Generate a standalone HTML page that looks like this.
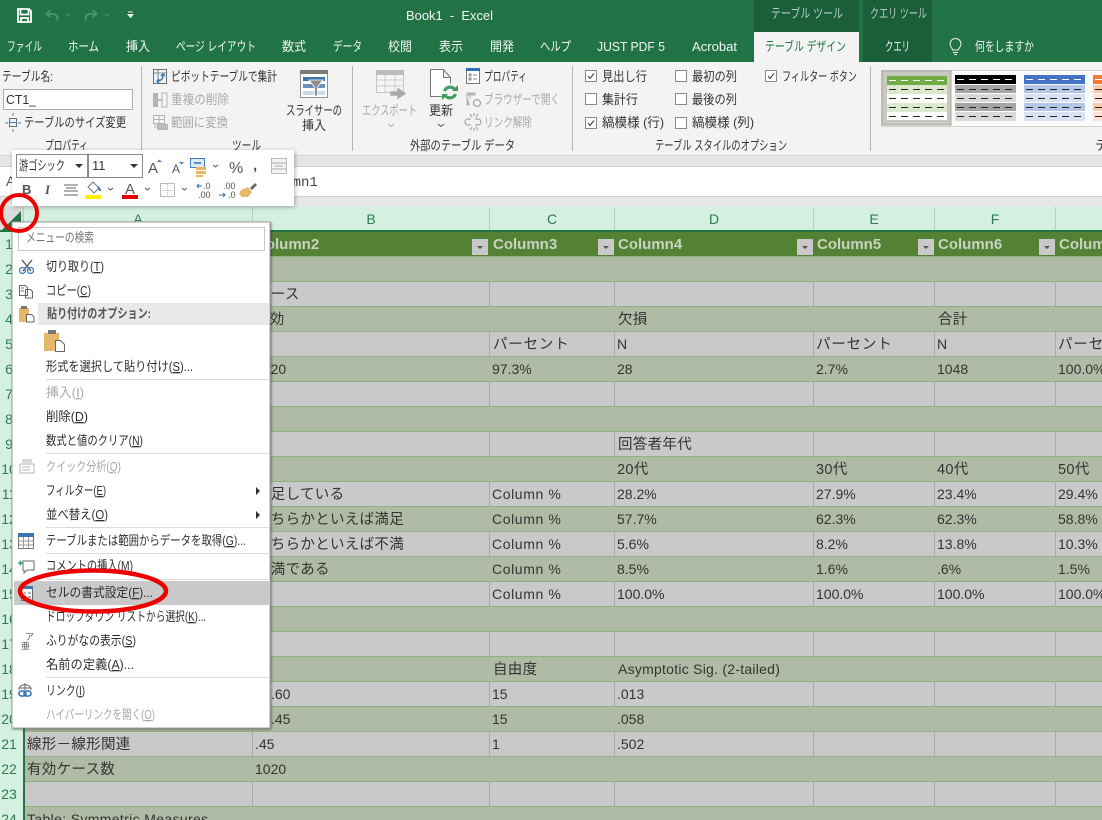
<!DOCTYPE html>
<html lang="ja">
<head>
<meta charset="utf-8">
<title>Book1 - Excel</title>
<style>
html,body{margin:0;padding:0;width:1102px;height:820px;overflow:hidden;background:#fff}
svg{display:block;position:absolute;left:0;top:0}
text{font-family:"Liberation Sans","Noto Sans CJK JP",sans-serif;font-size:13px;fill:#333;white-space:pre}
.tab{fill:#f2f6f3;font-size:13px}
.rb{fill:#333;font-size:13px}
.gr{fill:#a9a9a9;font-size:13px}
.m{fill:#2e2e2e;font-size:13px}
.md{fill:#a8a8a8;font-size:13px}
.cell{font-size:14px;fill:#333}
.jp{font-size:14.5px;fill:#333;letter-spacing:.3px}
.cp{font-size:14px;fill:#333;letter-spacing:.6px}
.hd{font-size:15px;font-weight:bold;fill:#c9d3c0}
.rn{font-size:14px;fill:#2f7a52;text-anchor:middle}
.ch{font-size:14px;fill:#2f7a52;text-anchor:middle}
.vl{stroke:#a8a8a8;stroke-width:1}
</style>
</head>
<body>
<svg width="1102" height="820" viewBox="0 0 1102 820" xmlns="http://www.w3.org/2000/svg">
<!-- title bar -->
<rect width="1102" height="62" fill="#217346"/>
<rect x="754" y="0" width="105" height="32" fill="#1b5e3a"/>
<rect x="863" y="0" width="69" height="62" fill="#1b5e3a"/>
<rect x="754" y="32" width="105" height="30" fill="#f3f3f3"/>
<!-- QAT -->
<path d="M18 9h11l2 2v11H18z M20.500 9.500v5h8v-5 M21 18h7v4h-7z" fill="none" stroke="#fff" stroke-width="1.800"/>
<path d="M50 10l-3.500 4 4 3M47 14h6a4.500 4.500 0 0 1 4.500 4.500c0 1-.3 1.500-.6 2" fill="none" stroke="#4f9070" stroke-width="2"/>
<path d="M66 14l2 2 2-2" stroke="#4f9070" fill="none"/>
<path d="M93 10l3.500 4-4 3M96 14h-6a4.500 4.500 0 0 0-4.500 4.500c0 1 .3 1.500.6 2" fill="none" stroke="#4f9070" stroke-width="2"/>
<path d="M105 14l2 2 2-2" stroke="#4f9070" fill="none"/>
<path d="M128 12h5M128 14.500h5l-2.500 3z" stroke="#e8f0ea" fill="#e8f0ea" stroke-width="1"/>
<text x="406" y="20" class="tab" textLength="87" lengthAdjust="spacingAndGlyphs">Book1  -  Excel</text>
<text x="771" y="18" style="fill:#b9cfc2" textLength="72" lengthAdjust="spacingAndGlyphs">テーブル ツール</text>
<text x="870" y="18" style="fill:#b9cfc2" textLength="57" lengthAdjust="spacingAndGlyphs">クエリ ツール</text>
<!-- tabs -->
<g>
<text x="7" y="51" class="tab" textLength="35" lengthAdjust="spacingAndGlyphs">ファイル</text>
<text x="68" y="51" class="tab" textLength="31" lengthAdjust="spacingAndGlyphs">ホーム</text>
<text x="126" y="51" class="tab" textLength="24" lengthAdjust="spacingAndGlyphs">挿入</text>
<text x="176" y="51" class="tab" textLength="80" lengthAdjust="spacingAndGlyphs">ページ レイアウト</text>
<text x="282" y="51" class="tab" textLength="24" lengthAdjust="spacingAndGlyphs">数式</text>
<text x="333" y="51" class="tab" textLength="29" lengthAdjust="spacingAndGlyphs">データ</text>
<text x="388" y="51" class="tab" textLength="24" lengthAdjust="spacingAndGlyphs">校閲</text>
<text x="439" y="51" class="tab" textLength="24" lengthAdjust="spacingAndGlyphs">表示</text>
<text x="490" y="51" class="tab" textLength="24" lengthAdjust="spacingAndGlyphs">開発</text>
<text x="540" y="51" class="tab" textLength="31" lengthAdjust="spacingAndGlyphs">ヘルプ</text>
<text x="597" y="51" class="tab" textLength="68" lengthAdjust="spacingAndGlyphs">JUST PDF 5</text>
<text x="692" y="51" class="tab" textLength="45" lengthAdjust="spacingAndGlyphs">Acrobat</text>
<text x="765" y="51" style="fill:#217346" textLength="81" lengthAdjust="spacingAndGlyphs">テーブル デザイン</text>
<text x="885" y="51" class="tab" textLength="25" lengthAdjust="spacingAndGlyphs">クエリ</text>
<text x="975" y="51" class="tab" textLength="59" lengthAdjust="spacingAndGlyphs">何をしますか</text>
<path d="M952.500 50c0-2-2.500-3-2.500-6a5.500 5.500 0 0 1 11 0c0 3-2.500 4-2.500 6z M953 52.500h5M954 54.500h3" fill="none" stroke="#e8f0ea" stroke-width="1"/>
</g>
<!-- ribbon -->
<rect x="0" y="62" width="1102" height="93" fill="#f3f3f3"/>
<rect x="0" y="155" width="1102" height="52" fill="#e6e6e6"/>
<rect x="0" y="155" width="1102" height="1" fill="#d2d2d2"/>
<rect x="141" y="66" width="1" height="85" fill="#b5b5b5"/>
<rect x="352" y="66" width="1" height="85" fill="#b5b5b5"/>
<rect x="572" y="66" width="1" height="85" fill="#b5b5b5"/>
<rect x="870" y="66" width="1" height="85" fill="#b5b5b5"/>
<text x="2" y="81" class="rb" textLength="51" lengthAdjust="spacingAndGlyphs">テーブル名:</text>
<rect x="3.500" y="89.500" width="129" height="20" fill="#fff" stroke="#ababab"/>
<text x="6" y="104" class="rb" textLength="30" lengthAdjust="spacingAndGlyphs">CT1_</text>
<g fill="none" stroke="#3f7fc1" stroke-width="1">
<rect x="9.500" y="118.500" width="7" height="8" stroke="#6d6d6d"/>
<path d="M13 113v3M13 129v3M5 123h3M18 123h3M9.500 122.500h7" />
</g>
<text x="24" y="127" class="rb" textLength="102" lengthAdjust="spacingAndGlyphs">テーブルのサイズ変更</text>
<text x="45" y="150" class="rb" textLength="43" lengthAdjust="spacingAndGlyphs">プロパティ</text>
<g>
<rect x="153.500" y="69.500" width="13" height="14" fill="#eef3f8" stroke="#6d6d6d"/>
<path d="M154 73h12M158 70v13" stroke="#8a8a8a"/>
<path d="M157 81c4 0 6-2 6-6M161 76l2-2 2 2M159 79l-2 2 2 2" fill="none" stroke="#2f72b6" stroke-width="1.300"/>
</g>
<text x="171" y="81" class="rb" textLength="106" lengthAdjust="spacingAndGlyphs">ピボットテーブルで集計</text>
<g fill="#b5b5b5">
<rect x="153" y="93" width="5" height="14"/><rect x="162" y="93" width="5" height="14" fill="none" stroke="#b5b5b5"/>
<path d="M158 100h4" stroke="#8a8a8a"/>
</g>
<text x="171" y="104" class="gr" textLength="58" lengthAdjust="spacingAndGlyphs">重複の削除</text>
<g fill="none" stroke="#b5b5b5">
<rect x="153.500" y="115.500" width="11" height="8"/><path d="M154 119.500h10M159 116v7"/>
<rect x="157.500" y="124.500" width="10" height="5" fill="#bdbdbd"/><path d="M155 124v3h3"/>
</g>
<text x="171" y="127" class="gr" textLength="57" lengthAdjust="spacingAndGlyphs">範囲に変換</text>
<text x="232" y="150" class="rb" textLength="29" lengthAdjust="spacingAndGlyphs">ツール</text>
<!-- slicer -->
<rect x="300.500" y="70.500" width="27" height="27" fill="#fff" stroke="#8f8f8f"/>
<rect x="300" y="70" width="28" height="4" fill="#7a7a7a"/>
<rect x="303" y="77" width="22" height="4" fill="#3f75ad"/>
<rect x="303" y="84" width="22" height="4" fill="#3f75ad" opacity=".8"/>
<rect x="303" y="91" width="22" height="4" fill="#c9d9e8"/>
<path d="M309 80h14l-5.500 7v9h-3v-9z" fill="#8e8e8e" stroke="#fff" stroke-width=".8"/>
<text x="286" y="115" class="rb" textLength="56" lengthAdjust="spacingAndGlyphs">スライサーの</text>
<text x="302" y="130" class="rb" textLength="24" lengthAdjust="spacingAndGlyphs">挿入</text>
<!-- export -->
<g>
<rect x="376.500" y="70.500" width="27" height="22" fill="#f5f5f5" stroke="#c4c4c4"/>
<rect x="376" y="70" width="28" height="5" fill="#bcbcbc"/>
<path d="M376 80h28M376 86h28M385 75v18M395 75v18" stroke="#cfcfcf"/>
<path d="M397 87l10 6.500-10 6.500v-4h-7v-5h7z" fill="#a9a9a9" stroke="#f3f3f3" stroke-width=".6"/>
</g>
<text x="362" y="115" class="gr" textLength="55" lengthAdjust="spacingAndGlyphs">エクスポート</text>
<path d="M388 124l3 2.500 3-2.500" fill="none" stroke="#b0b0b0"/>
<!-- refresh -->
<path d="M430.500 69.500h13l7 8v19h-20z M443.500 69.500v8h7" fill="#fff" stroke="#777"/>
<circle cx="450" cy="92.500" r="9" fill="#f3f3f3"/>
<path d="M444.500 91a6 6 0 0 1 10-2M455.500 94a6 6 0 0 1-10 2" fill="none" stroke="#3f9a63" stroke-width="3"/>
<path d="M452 91h6v-6zM448 94h-6v6z" fill="#3f9a63"/>
<text x="429" y="115" class="rb" textLength="24" lengthAdjust="spacingAndGlyphs">更新</text>
<path d="M438 124l3 2.500 3-2.500" fill="none" stroke="#555"/>
<!-- properties etc -->
<rect x="466.500" y="69.500" width="13" height="14" fill="#fff" stroke="#777"/>
<rect x="466" y="68" width="14" height="3" fill="#2f72b6"/>
<path d="M469 74h2v2h-2zM469 78h2v2h-2zM473 75h4M473 79h4" stroke="#666" fill="none" stroke-width=".8"/>
<text x="484" y="81" class="rb" textLength="43" lengthAdjust="spacingAndGlyphs">プロパティ</text>
<path d="M467 93h8v2h-8zM467 95v10h3M470 95v4" fill="#b5b5b5" stroke="#b5b5b5"/>
<circle cx="477" cy="103" r="3.500" fill="none" stroke="#a5a5a5" stroke-width="1.300"/>
<text x="484" y="104" class="gr" textLength="76" lengthAdjust="spacingAndGlyphs">ブラウザーで開く</text>
<path d="M471 119h-3a2.500 2.500 0 0 0 0 6h3M475 119h3a2.500 2.500 0 0 1 0 6h-3M472 117l-2-3M474 116v-3M476 117l2-3M472 127l-2 3M474 128v3M476 127l2 3" fill="none" stroke="#a9a9a9" stroke-width="1.200"/>
<text x="484" y="127" class="gr" textLength="48" lengthAdjust="spacingAndGlyphs">リンク解除</text>
<text x="410" y="150" class="rb" textLength="105" lengthAdjust="spacingAndGlyphs">外部のテーブル データ</text>
<!-- checkboxes -->
<g fill="#fff" stroke="#8a8a8a">
<rect x="585.500" y="70.500" width="11" height="11"/>
<rect x="585.500" y="93.500" width="11" height="11"/>
<rect x="585.500" y="117.500" width="11" height="11"/>
<rect x="675.500" y="70.500" width="11" height="11"/>
<rect x="675.500" y="93.500" width="11" height="11"/>
<rect x="675.500" y="117.500" width="11" height="11"/>
<rect x="765.500" y="70.500" width="11" height="11"/>
</g>
<g fill="none" stroke="#444" stroke-width="1.100">
<path d="M588 76l2 2.500 4-5"/>
<path d="M588 123l2 2.500 4-5"/>
<path d="M768 76l2 2.500 4-5"/>
</g>
<text x="602" y="81" class="rb" textLength="45" lengthAdjust="spacingAndGlyphs">見出し行</text>
<text x="602" y="104" class="rb" textLength="36" lengthAdjust="spacingAndGlyphs">集計行</text>
<text x="602" y="127" class="rb" textLength="62" lengthAdjust="spacingAndGlyphs">縞模様 (行)</text>
<text x="692" y="81" class="rb" textLength="45" lengthAdjust="spacingAndGlyphs">最初の列</text>
<text x="692" y="104" class="rb" textLength="45" lengthAdjust="spacingAndGlyphs">最後の列</text>
<text x="692" y="127" class="rb" textLength="62" lengthAdjust="spacingAndGlyphs">縞模様 (列)</text>
<text x="782" y="81" class="rb" textLength="75" lengthAdjust="spacingAndGlyphs">フィルター ボタン</text>
<text x="655" y="150" class="rb" textLength="132" lengthAdjust="spacingAndGlyphs">テーブル スタイルのオプション</text>
<text x="1095" y="150" class="rb">テ</text>
<!-- gallery -->
<rect x="881.500" y="70.500" width="221" height="56" fill="#fbfbfb" stroke="#d0d0d0"/>
<rect x="882" y="71" width="69" height="54" fill="#c8c8c0" stroke="#a8a8a0"/>
<g>
<rect x="887" y="76" width="60" height="9" fill="#70ad47"/><rect x="887" y="85" width="60" height="9" fill="#dbe9cf"/><rect x="887" y="94" width="60" height="9" fill="#fff"/><rect x="887" y="103" width="60" height="9" fill="#dbe9cf"/><rect x="887" y="112" width="60" height="8" fill="#fff"/>
<path d="M889 80.500h57" stroke="#fff" stroke-dasharray="7 5"/>
<path d="M889 89.500h57M889 98.500h57M889 107.500h57M889 116.500h57" stroke="#222" stroke-dasharray="7 5"/>
</g>
<g>
<rect x="955" y="75" width="61" height="9" fill="#000"/><rect x="955" y="85" width="61" height="8" fill="#a5a5a5"/><rect x="955" y="94" width="61" height="8" fill="#d9d9d9"/><rect x="955" y="103" width="61" height="8" fill="#a5a5a5"/><rect x="955" y="112" width="61" height="9" fill="#d9d9d9"/>
<path d="M957 79.500h58" stroke="#fff" stroke-dasharray="7 5"/>
<path d="M957 89.500h58M957 98.500h58M957 107.500h58M957 116.500h58" stroke="#222" stroke-dasharray="7 5"/>
</g>
<g>
<rect x="1024" y="75" width="61" height="9" fill="#4472c4"/><rect x="1024" y="85" width="61" height="8" fill="#b4c6e7"/><rect x="1024" y="94" width="61" height="8" fill="#d9e2f3"/><rect x="1024" y="103" width="61" height="8" fill="#b4c6e7"/><rect x="1024" y="112" width="61" height="9" fill="#d9e2f3"/>
<path d="M1026 79.500h58" stroke="#fff" stroke-dasharray="7 5"/>
<path d="M1026 89.500h58M1026 98.500h58M1026 107.500h58M1026 116.500h58" stroke="#222" stroke-dasharray="7 5"/>
</g>
<g>
<rect x="1093" y="75" width="9" height="9" fill="#ed7d31"/><rect x="1093" y="85" width="9" height="8" fill="#f8cbad"/><rect x="1093" y="94" width="9" height="8" fill="#fbe4d5"/><rect x="1093" y="103" width="9" height="8" fill="#f8cbad"/><rect x="1093" y="112" width="9" height="9" fill="#fbe4d5"/>
<path d="M1095 79.500h7" stroke="#fff"/><path d="M1095 89.500h7M1095 98.500h7M1095 107.500h7M1095 116.500h7" stroke="#222"/>
</g>
<!-- formula bar -->
<rect x="0" y="167" width="1102" height="30" fill="#fff"/>
<rect x="0" y="166" width="1102" height="1" fill="#d0d0d0"/>
<rect x="0" y="196" width="1102" height="1" fill="#d0d0d0"/>
<text x="6" y="186" class="cell" style="fill:#555">A</text>
<text x="259" y="186" class="cell" style="font-family:'Liberation Mono',monospace;fill:#444">Column1</text>
<!-- column header -->
<rect x="0" y="207" width="1102" height="24" fill="#d3f0e0"/>
<rect x="0" y="207" width="23" height="25" fill="#dcdcdc"/>
<path d="M1 231L21 211V231Z" fill="#217346"/>
<g fill="#b3cfbf">
<rect x="23" y="207" width="1" height="23"/><rect x="252" y="207" width="1" height="23"/><rect x="489" y="207" width="1" height="23"/><rect x="614" y="207" width="1" height="23"/><rect x="813" y="207" width="1" height="23"/><rect x="934" y="207" width="1" height="23"/><rect x="1055" y="207" width="1" height="23"/>
</g>
<text x="138" y="224" class="ch">A</text><text x="371" y="224" class="ch">B</text><text x="552" y="224" class="ch">C</text><text x="714" y="224" class="ch">D</text><text x="874" y="224" class="ch">E</text><text x="995" y="224" class="ch">F</text>
<rect x="0" y="230" width="1102" height="2" fill="#217346"/>
<!-- row header -->
<rect x="0" y="232" width="23" height="588" fill="#d3f0e0"/>
<rect x="23" y="232" width="2" height="588" fill="#217346"/>
<g>
<text x="9" y="249" class="rn">1</text><text x="9" y="274" class="rn">2</text><text x="9" y="299" class="rn">3</text><text x="9" y="324" class="rn">4</text><text x="9" y="349" class="rn">5</text><text x="9" y="374" class="rn">6</text><text x="9" y="399" class="rn">7</text><text x="9" y="424" class="rn">8</text><text x="9" y="449" class="rn">9</text><text x="9" y="474" class="rn">10</text><text x="9" y="499" class="rn">11</text><text x="9" y="524" class="rn">12</text><text x="9" y="549" class="rn">13</text><text x="9" y="574" class="rn">14</text><text x="9" y="599" class="rn">15</text><text x="9" y="624" class="rn">16</text><text x="9" y="649" class="rn">17</text><text x="9" y="674" class="rn">18</text><text x="9" y="699" class="rn">19</text><text x="9" y="724" class="rn">20</text><text x="9" y="749" class="rn">21</text><text x="9" y="774" class="rn">22</text><text x="9" y="799" class="rn">23</text><text x="9" y="824" class="rn">24</text>
</g>
<!-- table rows -->
<rect x="25" y="232" width="1077" height="24" fill="#548235"/>
<g fill="#b0bba6">
<rect x="25" y="257" width="1077" height="24"/><rect x="25" y="307" width="1077" height="24"/><rect x="25" y="357" width="1077" height="24"/><rect x="25" y="407" width="1077" height="24"/><rect x="25" y="457" width="1077" height="24"/><rect x="25" y="507" width="1077" height="24"/><rect x="25" y="557" width="1077" height="24"/><rect x="25" y="607" width="1077" height="24"/><rect x="25" y="657" width="1077" height="24"/><rect x="25" y="707" width="1077" height="24"/><rect x="25" y="757" width="1077" height="24"/><rect x="25" y="807" width="1077" height="13"/>
</g>
<g fill="#c9c9c9">
<rect x="25" y="282" width="1077" height="24"/><rect x="25" y="332" width="1077" height="24"/><rect x="25" y="382" width="1077" height="24"/><rect x="25" y="432" width="1077" height="24"/><rect x="25" y="482" width="1077" height="24"/><rect x="25" y="532" width="1077" height="24"/><rect x="25" y="582" width="1077" height="24"/><rect x="25" y="632" width="1077" height="24"/><rect x="25" y="682" width="1077" height="24"/><rect x="25" y="732" width="1077" height="24"/><rect x="25" y="782" width="1077" height="24"/>
</g>
<g fill="#8fb27c">
<rect x="25" y="256" width="1077" height="1"/><rect x="25" y="281" width="1077" height="1"/><rect x="25" y="306" width="1077" height="1"/><rect x="25" y="331" width="1077" height="1"/><rect x="25" y="356" width="1077" height="1"/><rect x="25" y="381" width="1077" height="1"/><rect x="25" y="406" width="1077" height="1"/><rect x="25" y="431" width="1077" height="1"/><rect x="25" y="456" width="1077" height="1"/><rect x="25" y="481" width="1077" height="1"/><rect x="25" y="506" width="1077" height="1"/><rect x="25" y="531" width="1077" height="1"/><rect x="25" y="556" width="1077" height="1"/><rect x="25" y="581" width="1077" height="1"/><rect x="25" y="606" width="1077" height="1"/><rect x="25" y="631" width="1077" height="1"/><rect x="25" y="656" width="1077" height="1"/><rect x="25" y="681" width="1077" height="1"/><rect x="25" y="706" width="1077" height="1"/><rect x="25" y="731" width="1077" height="1"/><rect x="25" y="756" width="1077" height="1"/><rect x="25" y="781" width="1077" height="1"/><rect x="25" y="806" width="1077" height="1"/>
</g>
<!-- vertical gridlines in grey rows -->
<g class="vl">
<path d="M252.500 282v24M489.500 282v24M614.500 282v24M813.500 282v24M934.500 282v24M1055.500 282v24"/>
<path d="M252.500 332v24M489.500 332v24M614.500 332v24M813.500 332v24M934.500 332v24M1055.500 332v24"/>
<path d="M252.500 382v24M489.500 382v24M614.500 382v24M813.500 382v24M934.500 382v24M1055.500 382v24"/>
<path d="M252.500 432v24M489.500 432v24M614.500 432v24M813.500 432v24M934.500 432v24M1055.500 432v24"/>
<path d="M252.500 482v24M489.500 482v24M614.500 482v24M813.500 482v24M934.500 482v24M1055.500 482v24"/>
<path d="M252.500 532v24M489.500 532v24M614.500 532v24M813.500 532v24M934.500 532v24M1055.500 532v24"/>
<path d="M252.500 582v24M489.500 582v24M614.500 582v24M813.500 582v24M934.500 582v24M1055.500 582v24"/>
<path d="M252.500 632v24M489.500 632v24M614.500 632v24M813.500 632v24M934.500 632v24M1055.500 632v24"/>
<path d="M252.500 682v24M489.500 682v24M614.500 682v24M813.500 682v24M934.500 682v24M1055.500 682v24"/>
<path d="M252.500 732v24M489.500 732v24M614.500 732v24M813.500 732v24M934.500 732v24M1055.500 732v24"/>
<path d="M252.500 782v24M489.500 782v24M614.500 782v24M813.500 782v24M934.500 782v24M1055.500 782v24"/>
</g>
<!-- header cells -->
<text x="255" y="249" class="hd">Column2</text>
<text x="493" y="249" class="hd">Column3</text>
<text x="618" y="249" class="hd">Column4</text>
<text x="817" y="249" class="hd">Column5</text>
<text x="938" y="249" class="hd">Column6</text>
<text x="1059" y="249" class="hd">Column7</text>
<g>
<rect x="472" y="239" width="16" height="16" fill="#c9c9c9"/><path d="M477 246h6l-3 3z" fill="#555"/>
<rect x="598" y="239" width="16" height="16" fill="#c9c9c9"/><path d="M603 246h6l-3 3z" fill="#555"/>
<rect x="797" y="239" width="16" height="16" fill="#c9c9c9"/><path d="M802 246h6l-3 3z" fill="#555"/>
<rect x="918" y="239" width="16" height="16" fill="#c9c9c9"/><path d="M923 246h6l-3 3z" fill="#555"/>
<rect x="1039" y="239" width="16" height="16" fill="#c9c9c9"/><path d="M1044 246h6l-3 3z" fill="#555"/>
</g>
<!-- data -->
<text x="256" y="299" class="jp">ケース</text>
<text x="255" y="324" class="jp">有効</text><text x="618" y="324" class="jp">欠損</text><text x="938" y="324" class="jp">合計</text>
<text x="493" y="349" class="jp" style="letter-spacing:.8px">パーセント</text><text x="617" y="349" class="cell">N</text><text x="816" y="349" class="jp" style="letter-spacing:.8px">パーセント</text><text x="937" y="349" class="cell">N</text><text x="1058" y="349" class="jp" style="letter-spacing:.8px">パーセント</text>
<text x="255" y="374" class="cell">1020</text><text x="492" y="374" class="cell">97.3%</text><text x="617" y="374" class="cell">28</text><text x="816" y="374" class="cell">2.7%</text><text x="937" y="374" class="cell">1048</text><text x="1058" y="374" class="cell">100.0%</text>
<text x="618" y="449" class="jp">回答者年代</text>
<text x="617" y="474" class="jp">20代</text><text x="816" y="474" class="jp">30代</text><text x="937" y="474" class="jp">40代</text><text x="1058" y="474" class="jp">50代</text>
<text x="256" y="499" class="jp">満足している</text><text x="492" y="499" class="cp">Column %</text><text x="617" y="499" class="cell">28.2%</text><text x="816" y="499" class="cell">27.9%</text><text x="937" y="499" class="cell">23.4%</text><text x="1058" y="499" class="cell">29.4%</text>
<text x="256" y="524" class="jp">どちらかといえば満足</text><text x="492" y="524" class="cp">Column %</text><text x="617" y="524" class="cell">57.7%</text><text x="816" y="524" class="cell">62.3%</text><text x="937" y="524" class="cell">62.3%</text><text x="1058" y="524" class="cell">58.8%</text>
<text x="256" y="549" class="jp">どちらかといえば不満</text><text x="492" y="549" class="cp">Column %</text><text x="617" y="549" class="cell">5.6%</text><text x="816" y="549" class="cell">8.2%</text><text x="937" y="549" class="cell">13.8%</text><text x="1058" y="549" class="cell">10.3%</text>
<text x="256" y="574" class="jp">不満である</text><text x="492" y="574" class="cp">Column %</text><text x="617" y="574" class="cell">8.5%</text><text x="816" y="574" class="cell">1.6%</text><text x="937" y="574" class="cell">.6%</text><text x="1058" y="574" class="cell">1.5%</text>
<text x="492" y="599" class="cp">Column %</text><text x="617" y="599" class="cell">100.0%</text><text x="816" y="599" class="cell">100.0%</text><text x="937" y="599" class="cell">100.0%</text><text x="1058" y="599" class="cell">100.0%</text>
<text x="493" y="674" class="jp">自由度</text><text x="618" y="674" class="cell" style="letter-spacing:.25px">Asymptotic Sig. (2-tailed)</text>
<text x="271" y="699" class="cell">.60</text><text x="492" y="699" class="cell">15</text><text x="617" y="699" class="cell">.013</text>
<text x="271" y="724" class="cell">.45</text><text x="492" y="724" class="cell">15</text><text x="617" y="724" class="cell">.058</text>
<text x="27" y="749" class="jp">線形－線形関連</text><text x="255" y="749" class="cell">.45</text><text x="492" y="749" class="cell">1</text><text x="617" y="749" class="cell">.502</text>
<text x="27" y="774" class="jp">有効ケース数</text><text x="255" y="774" class="cell">1020</text>
<text x="27" y="824" class="cell" style="letter-spacing:.35px">Table: Symmetric Measures</text>

<!-- mini toolbar -->
<rect x="12" y="150" width="282" height="56" fill="#fff" style="filter:drop-shadow(1px 1px 2px rgba(0,0,0,.3))"/>
<rect x="16.500" y="154.500" width="71" height="23" fill="#fff" stroke="#8a8a8a"/>
<rect x="88.500" y="154.500" width="54" height="23" fill="#fff" stroke="#8a8a8a"/>
<text x="19" y="170" class="rb" textLength="46" lengthAdjust="spacingAndGlyphs">游ゴシック</text>
<path d="M75 164h8l-4 4z M130 164h8l-4 4z" fill="#333"/>
<text x="92" y="170" class="rb" style="font-size:13px">11</text>
<text x="148" y="173" style="font-size:15px;fill:#555">A</text><path d="M157 162l2.500-2.500 2.500 2.500z" fill="#3f7fc1"/>
<text x="172" y="173" style="font-size:12px;fill:#555">A</text><path d="M179 162h5l-2.500 2.500z" fill="#3f7fc1"/>
<rect x="190.500" y="158.500" width="14" height="9" fill="#dfeaf5" stroke="#3f7fc1"/>
<path d="M194 163h7" stroke="#2f72b6" stroke-width="1.500"/>
<rect x="196" y="167" width="10" height="3" fill="#e8b862"/><rect x="196" y="171" width="10" height="3" fill="#e8b862"/><rect x="196" y="175" width="7" height="2" fill="#e8b862"/>
<path d="M213 165l2.500 2 2.500-2" fill="none" stroke="#555"/>
<text x="229" y="173" style="font-size:16px;fill:#555">%</text>
<text x="253" y="170" style="font-size:15px;font-weight:bold;fill:#555">,</text>
<rect x="271.500" y="158.500" width="15" height="15" fill="#f4f4f4" stroke="#bbb"/>
<path d="M272 163h14M272 169h14M275 166h8" stroke="#aaa"/>
<text x="22" y="194" style="font-size:13px;font-weight:bold;fill:#555">B</text>
<text x="45" y="194" style="font-size:13px;font-style:italic;font-family:'Liberation Serif',serif;fill:#555;font-weight:bold">I</text>
<path d="M64 185h14M66 188h10M64 191h14M64 195h14" stroke="#666"/>
<path d="M88 187l5-5 6 6-5 5z" fill="#fff" stroke="#777"/><path d="M98 187c2 2 2 3 2 4" stroke="#3f7fc1" stroke-width="2" fill="none"/>
<rect x="85" y="195" width="16" height="4" fill="#ffee00"/>
<path d="M108 188l2.500 2 2.500-2" fill="none" stroke="#555"/>
<text x="125" y="194" style="font-size:15px;fill:#555">A</text>
<rect x="122" y="195" width="16" height="4" fill="#e60000"/>
<path d="M145 188l2.500 2 2.500-2" fill="none" stroke="#555"/>
<rect x="160.500" y="183.500" width="14" height="13" fill="none" stroke="#777" stroke-dasharray="1 1"/>
<path d="M167.500 184v13M160 190.500h15" stroke="#bbb" stroke-dasharray="1 1"/>
<path d="M182 188l2.500 2 2.500-2" fill="none" stroke="#555"/>
<text x="203" y="189" style="font-size:9px;fill:#555">.0</text><text x="198" y="198" style="font-size:9px;fill:#555">.00</text>
<path d="M202 186h-5M199 184l-2 2 2 2" fill="none" stroke="#2f72b6"/>
<text x="223" y="189" style="font-size:9px;fill:#555">.00</text><text x="228" y="198" style="font-size:9px;fill:#555">.0</text>
<path d="M219 195h6M223 193l2 2-2 2" fill="none" stroke="#2f72b6"/>
<path d="M241 190l7-3 4 5-4 5-6 0-3-3z" fill="#e4b76a"/><path d="M250 188l5-5 2 2-5 5z" fill="#666"/>

<!-- context menu -->
<rect x="12" y="222" width="258" height="506" fill="#fff" stroke="#a0a0a0" style="filter:drop-shadow(1px 1px 1px rgba(0,0,0,.45))"/>
<rect x="18.500" y="227.500" width="246" height="23" fill="#fff" stroke="#c6c6c6"/>
<text x="26" y="242" style="fill:#777" textLength="68" lengthAdjust="spacingAndGlyphs">メニューの検索</text>
<rect x="38" y="303" width="231" height="22" fill="#e9e9e9"/>
<rect x="14" y="581" width="255" height="24" fill="#c9c9c9"/>
<g fill="#dcdcdc">
<rect x="46" y="379" width="223" height="1"/><rect x="46" y="453" width="223" height="1"/><rect x="46" y="527" width="223" height="1"/><rect x="46" y="553" width="223" height="1"/><rect x="46" y="579" width="223" height="1"/><rect x="46" y="677" width="223" height="1"/>
</g>
<text x="46" y="271" class="m" textLength="58" lengthAdjust="spacingAndGlyphs">切り取り(<tspan text-decoration="underline">T</tspan>)</text>
<text x="46" y="295" class="m" textLength="45" lengthAdjust="spacingAndGlyphs">コピー(<tspan text-decoration="underline">C</tspan>)</text>
<text x="47" y="318" style="font-weight:bold;fill:#555" textLength="104" lengthAdjust="spacingAndGlyphs">貼り付けのオプション:</text>
<text x="46" y="371" class="m" textLength="147" lengthAdjust="spacingAndGlyphs">形式を選択して貼り付け(<tspan text-decoration="underline">S</tspan>)...</text>
<text x="46" y="397" class="md" textLength="38" lengthAdjust="spacingAndGlyphs">挿入(<tspan text-decoration="underline">I</tspan>)</text>
<text x="46" y="421" class="m" textLength="42" lengthAdjust="spacingAndGlyphs">削除(<tspan text-decoration="underline">D</tspan>)</text>
<text x="46" y="445" class="m" textLength="97" lengthAdjust="spacingAndGlyphs">数式と値のクリア(<tspan text-decoration="underline">N</tspan>)</text>
<text x="46" y="471" class="md" textLength="75" lengthAdjust="spacingAndGlyphs">クイック分析(<tspan text-decoration="underline">Q</tspan>)</text>
<text x="46" y="495" class="m" textLength="60" lengthAdjust="spacingAndGlyphs">フィルター(<tspan text-decoration="underline">E</tspan>)</text>
<text x="46" y="519" class="m" textLength="62" lengthAdjust="spacingAndGlyphs">並べ替え(<tspan text-decoration="underline">O</tspan>)</text>
<text x="46" y="545" class="m" textLength="200" lengthAdjust="spacingAndGlyphs">テーブルまたは範囲からデータを取得(<tspan text-decoration="underline">G</tspan>)...</text>
<text x="46" y="570" class="m" textLength="87" lengthAdjust="spacingAndGlyphs">コメントの挿入(<tspan text-decoration="underline">M</tspan>)</text>
<text x="46" y="597" class="m" textLength="107" lengthAdjust="spacingAndGlyphs">セルの書式設定(<tspan text-decoration="underline">F</tspan>)...</text>
<text x="46" y="621" class="m" textLength="160" lengthAdjust="spacingAndGlyphs">ドロップダウン リストから選択(<tspan text-decoration="underline">K</tspan>)...</text>
<text x="46" y="645" class="m" textLength="90" lengthAdjust="spacingAndGlyphs">ふりがなの表示(<tspan text-decoration="underline">S</tspan>)</text>
<text x="46" y="669" class="m" textLength="88" lengthAdjust="spacingAndGlyphs">名前の定義(<tspan text-decoration="underline">A</tspan>)...</text>
<text x="46" y="695" class="m" textLength="39" lengthAdjust="spacingAndGlyphs">リンク(<tspan text-decoration="underline">I</tspan>)</text>
<text x="46" y="719" class="md" textLength="109" lengthAdjust="spacingAndGlyphs">ハイパーリンクを開く(<tspan text-decoration="underline">O</tspan>)</text>
<path d="M256 487l4 4-4 4zM256 511l4 4-4 4z" fill="#333"/>
<!-- menu icons -->
<path d="M22 260l9 11M32 260l-9 11" stroke="#666" stroke-width="1.400" fill="none"/>
<circle cx="22.500" cy="270.500" r="3" fill="none" stroke="#3f7fc1" stroke-width="1.300"/><circle cx="30.500" cy="270.500" r="3" fill="none" stroke="#3f7fc1" stroke-width="1.300"/>
<path d="M19.500 285.500h6l2 2v8h-8z M25.500 289.500h5l2 2v6.500h-7z M21 288h3M21 291h3" fill="#fff" stroke="#666"/>
<rect x="19" y="308" width="10" height="14" fill="#e4b76a"/><rect x="21" y="306" width="6" height="3" fill="#777"/>
<path d="M26.500 314.500h5l2.500 2.500v5h-7.500z" fill="#fff" stroke="#666"/>
<rect x="44" y="333" width="15" height="18" fill="#e4b76a"/><rect x="48" y="330" width="8" height="4" fill="#777"/>
<path d="M55.500 340.500h5l4 4v7h-9z" fill="#fff" stroke="#666"/>
<path d="M23 460h8v2h-8zM20 464h14v9H20zM22 467h8M22 470h8" fill="none" stroke="#b5b5b5"/>
<rect x="18.500" y="533.500" width="15" height="15" fill="#fff" stroke="#777"/><rect x="18" y="533" width="16" height="4" fill="#3f75ad"/>
<path d="M19 541h14M19 545h14M23.500 537v11M28.500 537v11" stroke="#999"/>
<path d="M23 561h11v9h-7l-3 3v-3h-1z" fill="#fff" stroke="#666"/><path d="M18 563h5M20.500 560.500v5" stroke="#2e8b57" stroke-width="1.300"/>
<rect x="21.500" y="586.500" width="11" height="14" fill="#fff" stroke="#666"/><rect x="21" y="586" width="12" height="3" fill="#3f75ad"/>
<path d="M24 593h2M28 593h3M24 597h2M28 597h3" stroke="#666"/>
<text x="25" y="640" style="font-size:9px;fill:#555">ア</text><text x="21" y="649" style="font-size:9px;fill:#555">亜</text>
<path d="M19 690v-2a7 7 0 0 1 12 0v2M19 688h12M25 683v7" stroke="#666" fill="none"/>
<rect x="19" y="691" width="7" height="5" rx="2.500" fill="none" stroke="#2f72b6" stroke-width="1.600"/><rect x="24" y="691" width="7" height="5" rx="2.500" fill="none" stroke="#2f72b6" stroke-width="1.600"/>
<!-- red annotations -->
<ellipse cx="19" cy="213" rx="18" ry="18" fill="none" stroke="#ed0000" stroke-width="4"/>
<ellipse cx="93" cy="591" rx="73" ry="20.500" fill="none" stroke="#ed0000" stroke-width="4.500"/>
</svg>
</body>
</html>
